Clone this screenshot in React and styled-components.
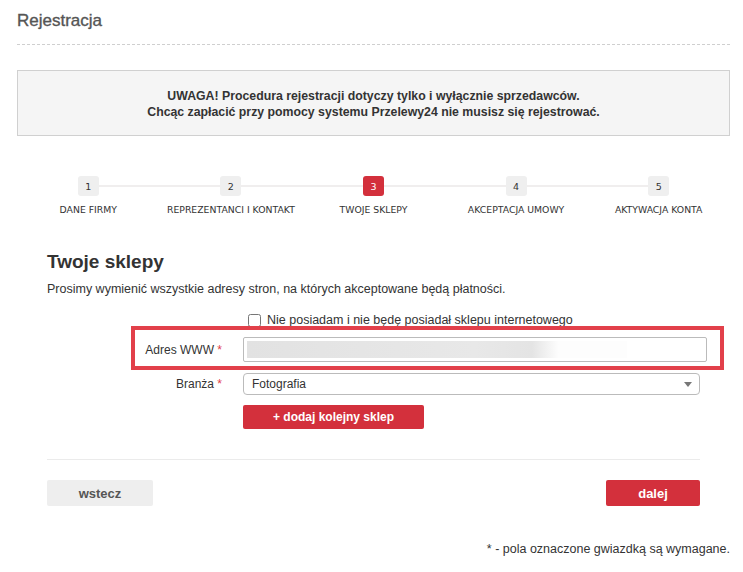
import React from "react";
import styled, { createGlobalStyle } from "styled-components";

const GlobalStyle = createGlobalStyle`
  body {
    margin: 0;
    background: #fff;
    font-family: "Liberation Sans", Arial, sans-serif;
    color: #333;
  }
`;

const steps = [
  { n: 1, label: "Dane firmy" },
  { n: 2, label: "Reprezentanci i kontakt" },
  { n: 3, label: "Twoje sklepy", active: true },
  { n: 4, label: "Akceptacja umowy" },
  { n: 5, label: "Aktywacja konta" },
];

export default function App() {
  return (
    <>
      <GlobalStyle />
      <Page>
        <Header>
          <h1>Rejestracja</h1>
        </Header>

        <Notice>
          <p>UWAGA! Procedura rejestracji dotyczy tylko i wyłącznie sprzedawców.</p>
          <p>Chcąc zapłacić przy pomocy systemu Przelewy24 nie musisz się rejestrować.</p>
        </Notice>

        <Steps>
          {steps.map((s) => (
            <Step key={s.n}>
              <StepNumber $active={s.active}>{s.n}</StepNumber>
              <StepLabel>{s.label}</StepLabel>
            </Step>
          ))}
        </Steps>

        <Form>
          <h2>Twoje sklepy</h2>
          <Lead>
            Prosimy wymienić wszystkie adresy stron, na których akceptowane będą
            płatności.
          </Lead>

          <Row $gap="15px">
            <span />
            <CheckLabel>
              <input type="checkbox" />
              Nie posiadam i nie będę posiadał sklepu internetowego
            </CheckLabel>
          </Row>

          <Row $gap="9px" $highlight>
            <Label>
              Adres WWW <Req>*</Req>
            </Label>
            <UrlInput type="text" readOnly />
          </Row>

          <Row $gap="11px">
            <Label>
              Branża <Req>*</Req>
            </Label>
            <SelectBox>
              <select defaultValue="fot">
                <option value="fot">Fotografia</option>
              </select>
            </SelectBox>
          </Row>

          <Row $gap="10px">
            <span />
            <div>
              <AddButton>+ dodaj kolejny sklep</AddButton>
            </div>
          </Row>

          <Actions>
            <Button>wstecz</Button>
            <Button $primary>dalej</Button>
          </Actions>
        </Form>

        <Footnote>* - pola oznaczone gwiazdką są wymagane.</Footnote>
      </Page>
    </>
  );
}

const Page = styled.div`
  padding: 0 13px 20px 17px;
`;

const Header = styled.div`
  border-bottom: 1px dashed #cfcfcf;
  padding: 10px 0 12px;

  h1 {
    margin: 0;
    font-size: 17px;
    line-height: 22px;
    font-weight: normal;
    color: #555;
    -webkit-text-stroke: 0.35px #555;
  }
`;

const Notice = styled.div`
  margin-top: 25px;
  background: #f5f5f5;
  border: 1px solid #d0d0d0;
  padding: 17px 10px 15px;
  text-align: center;

  p {
    margin: 0;
    font-size: 12.3px;
    line-height: 16px;
    font-weight: bold;
    color: #333;
  }
`;

const Steps = styled.div`
  position: relative;
  display: flex;
  margin-top: 40px;

  &::before {
    content: "";
    position: absolute;
    top: 9px;
    left: 10%;
    right: 10%;
    height: 2px;
    background: #f0eeee;
  }
`;

const Step = styled.div`
  flex: 1;
  display: flex;
  flex-direction: column;
  align-items: center;
  position: relative;
`;

const StepNumber = styled.div`
  width: 21px;
  height: 20px;
  border-radius: 3px;
  display: flex;
  align-items: center;
  justify-content: center;
  font-family: "DejaVu Sans", Verdana, sans-serif;
  font-size: 9.5px;
  background: ${(p) => (p.$active ? "#d3303c" : "#efefef")};
  color: ${(p) => (p.$active ? "#fff" : "#333")};
`;

const StepLabel = styled.div`
  margin-top: 8px;
  font-family: "DejaVu Sans", Verdana, sans-serif;
  font-size: 9.3px;
  line-height: 12px;
  text-transform: uppercase;
  color: #333;
  white-space: nowrap;
`;

const Form = styled.div`
  padding: 0 30px 0 30px;
  margin-top: 34px;

  h2 {
    margin: 0;
    font-size: 19px;
    line-height: 24px;
    font-weight: bold;
    color: #333;
  }
`;

const Lead = styled.p`
  margin: 7px 0 0;
  font-size: 12.5px;
  line-height: 16px;
`;

const Row = styled.div`
  position: relative;
  display: grid;
  grid-template-columns: 175px 1fr;
  column-gap: 21px;
  align-items: center;
  margin-top: ${(p) => p.$gap};

  ${(p) =>
    p.$highlight &&
    `
    &::after {
      content: "";
      position: absolute;
      left: 84px;
      right: -24px;
      top: -11px;
      bottom: -8px;
      border: 4px solid #e2404a;
      pointer-events: none;
    }
  `}
`;

const Label = styled.label`
  text-align: right;
  font-size: 12px;
  color: #333;
`;

const Req = styled.span`
  color: #e2404a;
`;

const CheckLabel = styled.label`
  display: flex;
  align-items: center;
  gap: 6px;
  font-size: 12.5px;
  line-height: 16px;
  padding-left: 5px;

  input {
    margin: 0;
    width: 13px;
    height: 13px;
  }
`;

const UrlInput = styled.input`
  box-sizing: border-box;
  width: 464px;
  height: 25px;
  border: 1px solid #bbb;
  border-radius: 2px;
  background-color: #fff;
  background-image: linear-gradient(
    to right,
    #e2e2e2 0%,
    #e8e8e8 60%,
    #e4e4e4 75%,
    #fdfdfd 82%
  );
  background-repeat: no-repeat;
  background-position: 3px 3px;
  background-size: 380px 17px;
  outline: none;
`;

const SelectBox = styled.div`
  position: relative;
  width: 457px;

  select {
    display: block;
    box-sizing: border-box;
    width: 100%;
    height: 22px;
    padding: 0 8px;
    border: 1px solid #bbb;
    border-radius: 4px;
    background: #fff;
    font-family: "Liberation Sans", Arial, sans-serif;
    font-size: 12px;
    color: #333;
    appearance: none;
    outline: none;
  }

  &::after {
    content: "";
    position: absolute;
    right: 8px;
    top: 9px;
    border-left: 4px solid transparent;
    border-right: 4px solid transparent;
    border-top: 5px solid #777;
    pointer-events: none;
  }
`;

const AddButton = styled.button`
  display: block;
  width: 181px;
  height: 24px;
  border: 0;
  border-radius: 2px;
  background: #d3303c;
  color: #fff;
  font-family: "Liberation Sans", Arial, sans-serif;
  font-size: 12px;
  font-weight: bold;
`;

const Actions = styled.div`
  margin-top: 30px;
  border-top: 1px solid #ebebeb;
  padding-top: 20px;
  display: flex;
  justify-content: space-between;
`;

const Button = styled.button`
  width: ${(p) => (p.$primary ? "94px" : "106px")};
  height: 26px;
  border: 0;
  border-radius: 2px;
  background: ${(p) => (p.$primary ? "#d3303c" : "#eeeeee")};
  color: ${(p) => (p.$primary ? "#fff" : "#555")};
  font-family: "Liberation Sans", Arial, sans-serif;
  font-size: 13px;
  font-weight: bold;
`;

const Footnote = styled.p`
  margin: 36px 0 0;
  text-align: right;
  font-size: 12.5px;
  color: #333;
`;
